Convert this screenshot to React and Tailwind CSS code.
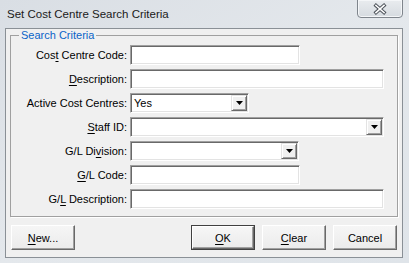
import React from "react";

const sunken =
  "bg-white border border-t-[#a0a0a0] border-l-[#a0a0a0] border-b-white border-r-white shadow-[inset_1px_1px_0_#696969,inset_-1px_-1px_0_#e3e3e3]";

function U({ children }) {
  return <span className="underline underline-offset-[2px]">{children}</span>;
}

function Field({ label, width, value, select }) {
  return (
    <div className="flex items-center h-[20px]">
      <div className="w-[119px] pr-[3px] text-right whitespace-nowrap leading-[14px]">{label}</div>
      <div className={`${sunken} h-[20px] flex items-center ${width}`}>
        <div className="flex-1 pl-[3px] leading-[14px]">{value}</div>
        {select && (
          <div className="h-[16px] w-[16px] mr-px bg-[#f0f0f0] border border-t-[#e3e3e3] border-l-[#e3e3e3] border-b-[#696969] border-r-[#696969] shadow-[inset_1px_1px_0_#ffffff,inset_-1px_-1px_0_#a0a0a0] flex items-center justify-center">
            <svg width="7" height="4" viewBox="0 0 7 4">
              <path d="M0 0 H7 L3.5 4 Z" fill="#000" />
            </svg>
          </div>
        )}
      </div>
    </div>
  );
}

function Btn({ children, def }) {
  return (
    <div
      className={`h-[25px] flex items-center justify-center ${
        def ? "w-[64px] border border-[#404040]" : "w-[64px]"
      }`}
    >
      <div className="w-full h-full bg-gradient-to-b from-[#f6f6f6] to-[#ebebeb] border border-t-white border-l-white border-b-[#696969] border-r-[#696969] shadow-[inset_-1px_-1px_0_#a0a0a0] flex items-center justify-center leading-[14px]">
        {children}
      </div>
    </div>
  );
}

export default function App() {
  return (
    <div className="w-[409px] h-[263px] bg-gradient-to-br from-[#d9dee4] via-[#e4e8ec] to-[#dfe4e9] flex flex-col overflow-hidden text-[11px] text-black font-['Liberation_Sans',Arial,sans-serif]">
      <div className="h-[28px] shrink-0 flex items-start">
        <div className="pl-[7px] pt-[7px] text-[11.5px] leading-[15px] text-[#1a1a1a]">
          Set Cost Centre Search Criteria
        </div>
        <div className="ml-auto mr-[6px] -mt-px w-[46px] h-[19px] rounded-b-[4px] border border-[#7f858c] bg-gradient-to-b from-[#e9ecef] to-[#d6dbe0] shadow-[inset_0_0_0_1px_#f4f6f8] flex items-center justify-center">
          <svg width="14" height="12" viewBox="0 0 14 12">
            <path d="M3 2.5 L11 9.5 M11 2.5 L3 9.5" stroke="#4d535a" strokeWidth="3.6" strokeLinecap="square" />
            <path d="M3 2.5 L11 9.5 M11 2.5 L3 9.5" stroke="#ffffff" strokeWidth="1.6" strokeLinecap="square" />
          </svg>
        </div>
      </div>
      <div className="ml-[5px] mr-[6px] mb-[5px] flex-1 border border-[#8a9096] bg-[#f0f0f0] flex flex-col px-[4px]">
        <fieldset className="border border-[#a0a0a0] shadow-[1px_1px_0_#ffffff] pt-[4px] pb-[7px] flex flex-col gap-[4px]">
          <legend className="ml-[8px] px-[2px] text-[#0a64c8] leading-[12px]">Search Criteria</legend>
          <Field label={<>Cos<U>t</U> Centre Code:</>} width="w-[170px]" />
          <Field label={<><U>D</U>escription:</>} width="w-[254px]" />
          <Field label="Active Cost Centres:" width="w-[119px]" value="Yes" select />
          <Field label={<><U>S</U>taff ID:</>} width="w-[254px]" select />
          <Field label={<>G/L Di<U>v</U>ision:</>} width="w-[169px]" select />
          <Field label={<><U>G</U>/L Code:</>} width="w-[170px]" />
          <Field label={<>G/<U>L</U> Description:</>} width="w-[254px]" />
        </fieldset>
        <div className="mt-[8px] flex items-center pl-px">
          <Btn><span><U>N</U>ew...</span></Btn>
          <div className="ml-auto flex gap-[7px] pr-px">
            <Btn def><span><U>O</U>K</span></Btn>
            <Btn><span><U>C</U>lear</span></Btn>
            <Btn>Cancel</Btn>
          </div>
        </div>
      </div>
    </div>
  );
}
